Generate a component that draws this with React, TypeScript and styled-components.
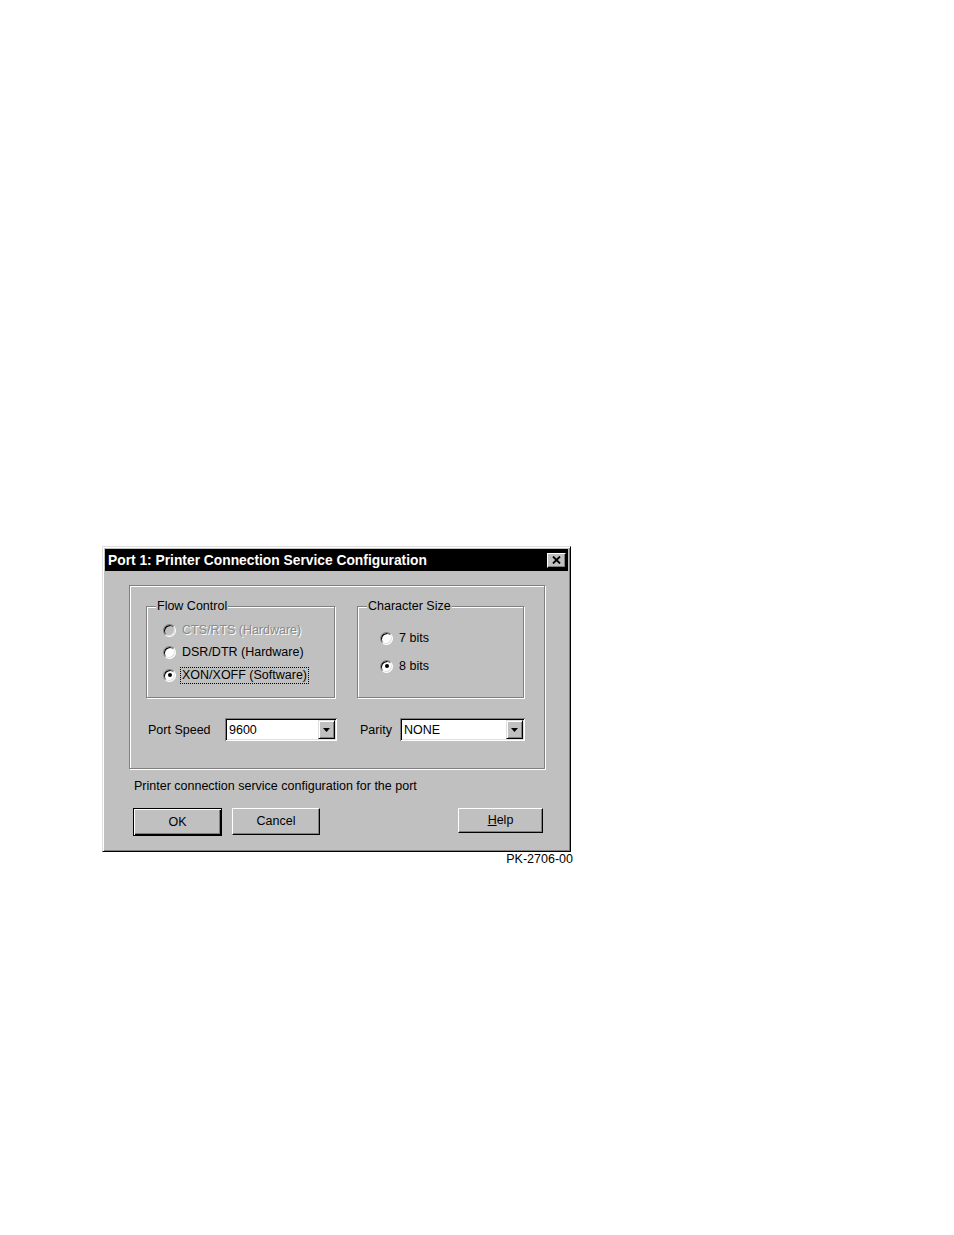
import React from 'react';
import styled, { createGlobalStyle } from 'styled-components';

const Global = createGlobalStyle`
  html, body { margin: 0; padding: 0; background: #fff; }
  body { font-family: "Liberation Sans", Arial, sans-serif; font-size: 12.5px; color: #000; }
  * { box-sizing: border-box; }
`;

const Page = styled.div`
  width: 954px;
  height: 1235px;
  padding: 546px 0 0 102px;
`;

const Figure = styled.div`
  width: 471px;
  display: flex;
  flex-direction: column;
`;

const Dialog = styled.div`
  width: 469px;
  height: 306px;
  background: #c0c0c0;
  border: 1px solid;
  border-color: #dfdfdf #000 #000 #dfdfdf;
  box-shadow: inset 1px 1px 0 #fff, inset -1px -1px 0 #808080;
  padding: 2px;
  display: flex;
  flex-direction: column;
`;

const TitleBar = styled.div`
  height: 22px;
  background: #000;
  color: #fff;
  display: flex;
  align-items: center;
  justify-content: space-between;
  padding: 0 2px 0 3px;
  font-weight: bold;
  font-size: 13.8px;
`;

const CloseButton = styled.div`
  width: 19px;
  height: 15px;
  background: #c0c0c0;
  border: 1px solid;
  border-color: #fff #000 #000 #fff;
  box-shadow: inset -1px -1px 0 #808080;
  display: flex;
  align-items: center;
  justify-content: center;
`;

const Body = styled.div`
  padding: 14px 0 0 24px;
  display: flex;
  flex-direction: column;
`;

const Panel = styled.div`
  width: 416px;
  height: 184px;
  border: 1px solid #808080;
  box-shadow: inset 1px 1px 0 #fff, 1px 1px 0 #fff;
  padding: 20px 0 0 16px;
  display: flex;
  flex-direction: column;
`;

const GroupRow = styled.div`
  display: flex;
  gap: 22px;
`;

const Group = styled.div<{ $w: number; $pt: number; $pl: number }>`
  position: relative;
  width: ${p => p.$w}px;
  height: 92px;
  border: 1px solid #808080;
  box-shadow: inset 1px 1px 0 #fff, 1px 1px 0 #fff;
  padding: ${p => p.$pt}px 0 0 ${p => p.$pl}px;
  display: flex;
  flex-direction: column;
`;

const Legend = styled.span`
  position: absolute;
  top: -8px;
  left: 9px;
  background: #c0c0c0;
  padding: 0 1px;
  line-height: 15px;
`;

const RadioRow = styled.div<{ $h: number }>`
  height: ${p => p.$h}px;
  display: flex;
  align-items: center;
  gap: 6px;
`;

const RadioCircle = styled.span<{ $disabled?: boolean }>`
  width: 13px;
  height: 13px;
  border-radius: 50%;
  border: 1px solid;
  border-color: #808080 #fff #fff #808080;
  box-shadow: inset 1px 1px 0 #000, inset -1px -1px 0 #dfdfdf;
  background: ${p => (p.$disabled ? '#c0c0c0' : '#fff')};
  display: flex;
  align-items: center;
  justify-content: center;
  flex: none;
`;

const Dot = styled.span`
  width: 4px;
  height: 4px;
  border-radius: 50%;
  background: #000;
`;

const RadioLabel = styled.span<{ $disabled?: boolean; $focus?: boolean }>`
  line-height: 15px;
  color: ${p => (p.$disabled ? '#8a8a8a' : '#000')};
  text-shadow: ${p => (p.$disabled ? '1px 1px 0 #fff' : 'none')};
  outline: ${p => (p.$focus ? '1px dotted #000' : 'none')};
  padding: 0 1px;
  margin-left: -1px;
`;

const FieldRow = styled.div`
  margin-top: 20px;
  display: flex;
  align-items: center;
`;

const FieldLabel = styled.span<{ $w: number; $ml?: number }>`
  width: ${p => p.$w}px;
  margin-left: ${p => p.$ml ?? 0}px;
  padding-left: 2px;
`;

const Combo = styled.div<{ $w: number }>`
  width: ${p => p.$w}px;
  height: 23px;
  background: #fff;
  box-shadow: inset 1px 1px 0 #808080, inset -1px -1px 0 #fff, inset 2px 2px 0 #000, inset -2px -2px 0 #dfdfdf;
  padding: 2px;
  display: flex;
  align-items: center;
`;

const ComboText = styled.span`
  flex: 1;
  padding-left: 2px;
`;

const DropButton = styled.div`
  width: 17px;
  height: 19px;
  background: #c0c0c0;
  border: 1px solid;
  border-color: #dfdfdf #000 #000 #dfdfdf;
  box-shadow: inset 1px 1px 0 #fff, inset -1px -1px 0 #808080;
  display: flex;
  align-items: center;
  justify-content: center;
`;

const StatusText = styled.div`
  margin-top: 10px;
  padding-left: 5px;
  line-height: 15px;
`;

const ButtonRow = styled.div`
  width: 416px;
  margin-top: 14px;
  padding: 0 2px 0 4px;
  display: flex;
  align-items: flex-start;
  gap: 10px;
`;

const Button = styled.div<{ $w: number; $h: number; $default?: boolean; $push?: boolean }>`
  width: ${p => p.$w}px;
  height: ${p => p.$h}px;
  margin-left: ${p => (p.$push ? 'auto' : '0')};
  background: #c0c0c0;
  border: 1px solid;
  border-color: ${p => (p.$default ? '#000' : '#fff #000 #000 #fff')};
  box-shadow: ${p =>
    p.$default
      ? 'inset 1px 1px 0 #fff, inset -1px -1px 0 #000, inset -2px -2px 0 #808080'
      : 'inset -1px -1px 0 #808080'};
  display: flex;
  align-items: center;
  justify-content: center;
  line-height: 15px;
`;

const Accel = styled.span`
  text-decoration: underline;
`;

const Caption = styled.div`
  margin-top: 0;
  text-align: right;
  line-height: 14px;
`;

const CloseIcon = () => (
  <svg width="9" height="8" viewBox="0 0 9 8">
    <path d="M1 0.5 L8 7.5 M8 0.5 L1 7.5" stroke="#000" strokeWidth="1.8" />
  </svg>
);

const Arrow = () => (
  <svg width="7" height="4" viewBox="0 0 7 4">
    <path d="M0 0 H7 L3.5 4 Z" fill="#000" />
  </svg>
);

type RadioProps = { label: string; checked?: boolean; disabled?: boolean; focus?: boolean; h: number };

const Radio = ({ label, checked, disabled, focus, h }: RadioProps) => (
  <RadioRow $h={h}>
    <RadioCircle $disabled={disabled}>{checked && <Dot />}</RadioCircle>
    <RadioLabel $disabled={disabled} $focus={focus}>{label}</RadioLabel>
  </RadioRow>
);

export default function App() {
  return (
    <>
      <Global />
      <Page>
        <Figure>
          <Dialog>
            <TitleBar>
              <span>Port 1: Printer Connection Service Configuration</span>
              <CloseButton>
                <CloseIcon />
              </CloseButton>
            </TitleBar>
            <Body>
              <Panel>
                <GroupRow>
                  <Group $w={189} $pt={12} $pl={16}>
                    <Legend>Flow Control</Legend>
                    <Radio h={22.5} label="CTS/RTS (Hardware)" disabled />
                    <Radio h={22.5} label="DSR/DTR (Hardware)" />
                    <Radio h={22.5} label="XON/XOFF (Software)" checked focus />
                  </Group>
                  <Group $w={167} $pt={17} $pl={22}>
                    <Legend>Character Size</Legend>
                    <Radio h={28} label="7 bits" />
                    <Radio h={28} label="8 bits" checked />
                  </Group>
                </GroupRow>
                <FieldRow>
                  <FieldLabel $w={79}>Port Speed</FieldLabel>
                  <Combo $w={112}>
                    <ComboText>9600</ComboText>
                    <DropButton>
                      <Arrow />
                    </DropButton>
                  </Combo>
                  <FieldLabel $w={42} $ml={21}>Parity</FieldLabel>
                  <Combo $w={125}>
                    <ComboText>NONE</ComboText>
                    <DropButton>
                      <Arrow />
                    </DropButton>
                  </Combo>
                </FieldRow>
              </Panel>
              <StatusText>Printer connection service configuration for the port</StatusText>
              <ButtonRow>
                <Button $w={89} $h={28} $default>OK</Button>
                <Button $w={88} $h={27}>Cancel</Button>
                <Button $w={85} $h={25} $push>
                  <span><Accel>H</Accel>elp</span>
                </Button>
              </ButtonRow>
            </Body>
          </Dialog>
          <Caption>PK-2706-00</Caption>
        </Figure>
      </Page>
    </>
  );
}
